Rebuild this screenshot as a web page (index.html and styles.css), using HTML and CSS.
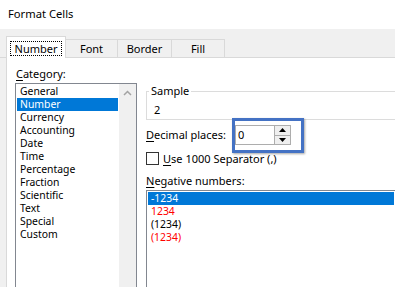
FILE: index.html
```html
<!DOCTYPE html>
<html lang="en">
<head>
    <meta charset="UTF-8">
    <meta name="viewport" content="width=device-width, initial-scale=1.0">
    <title>Format Cells</title>
    <link rel="stylesheet" href="styles.css">
</head>
<body>
    <div class="title">Format Cells</div>
    <div class="tabbar">
        <div class="tab active"><span class="focus">Number</span></div>
        <div class="tab tab-font">Font</div>
        <div class="tab tab-border">Border</div>
        <div class="tab tab-fill">Fill</div>
    </div>
    <div class="panel">
        <div class="category">
            <div class="label"><u>C</u>ategory:</div>
            <div class="listbox">
                <ul class="items">
                    <li>General</li>
                    <li class="selected">Number</li>
                    <li>Currency</li>
                    <li>Accounting</li>
                    <li>Date</li>
                    <li>Time</li>
                    <li>Percentage</li>
                    <li>Fraction</li>
                    <li>Scientific</li>
                    <li>Text</li>
                    <li>Special</li>
                    <li>Custom</li>
                </ul>
                <div class="scrollbar">
                    <div class="scroll-up">
                        <svg width="9" height="6" viewBox="0 0 9 6"><polyline points="1,5 4.5,1.5 8,5" fill="none" stroke="#a3a3a3" stroke-width="1.5"/></svg>
                    </div>
                </div>
            </div>
        </div>
        <div class="options">
            <fieldset class="sample">
                <legend>Sample</legend>
                <div class="sample-value">2</div>
            </fieldset>
            <div class="decimal-row">
                <div class="decimal-label"><u>D</u>ecimal places:</div>
                <div class="spin">
                    <div class="spin-value">0</div>
                    <div class="spin-buttons">
                        <div class="spin-btn">
                            <svg width="7" height="4" viewBox="0 0 7 4"><polygon points="0,4 3.5,0 7,4" fill="#000"/></svg>
                        </div>
                        <div class="spin-btn">
                            <svg width="7" height="4" viewBox="0 0 7 4"><polygon points="0,0 3.5,4 7,0" fill="#000"/></svg>
                        </div>
                    </div>
                </div>
            </div>
            <div class="check-row">
                <span class="checkbox"></span>
                <span><u>U</u>se 1000 Separator (,)</span>
            </div>
            <div class="label neg-label"><u>N</u>egative numbers:</div>
            <ul class="neglist">
                <li class="selected">-1234</li>
                <li class="red">1234</li>
                <li>(1234)</li>
                <li class="red">(1234)</li>
            </ul>
        </div>
    </div>
</body>
</html>
```

FILE: styles.css
```css
body {
    margin: 0;
    width: 395px;
    height: 287px;
    overflow: hidden;
    font-family: "Noto Sans", "Open Sans", sans-serif;
    font-size: 11px;
    color: #000;
    background: #f0f0f0;
    display: flex;
    flex-direction: column;
}
u {
    text-decoration: underline;
    text-underline-offset: 2px;
}
.title {
    flex-shrink: 0;
    background: #fff;
    height: 29px;
    line-height: 28px;
    padding-left: 8px;
    font-size: 11.2px;
}
.tabbar {
    flex-shrink: 0;
    height: 28px;
    border-bottom: 1px solid #d9d9d9;
    display: flex;
    align-items: flex-end;
    padding-left: 6px;
}
.tab {
    box-sizing: border-box;
    height: 18px;
    border-top: 1px solid #d9d9d9;
    border-right: 1px solid #d9d9d9;
    text-align: center;
    line-height: 18px;
}
.tab.active {
    width: 60px;
    height: 22px;
    margin-bottom: -1px;
    border-left: 1px solid #d9d9d9;
    background: #fff;
    padding-top: 4px;
    line-height: 13px;
    position: relative;
    z-index: 1;
}
.focus {
    display: inline-block;
    border: 1px dotted #000;
    padding: 0 2px;
    width: 46px;
}
.tab-font { width: 52px; }
.tab-border { width: 54px; }
.tab-fill { width: 53px; }
.panel {
    flex: 1;
    min-height: 0;
    background: #fff;
    margin-left: 6px;
    border-left: 1px solid #d9d9d9;
    display: flex;
    padding-top: 8px;
    gap: 9px;
}
.label {
    line-height: 16px;
    height: 16px;
    padding-left: 1px;
}
.category {
    padding-left: 8px;
    display: flex;
    flex-direction: column;
}
.listbox {
    flex: 1;
    margin-top: 1px;
    width: 122px;
    box-sizing: border-box;
    border: 1px solid #828790;
    border-bottom: none;
    display: flex;
}
.items, .neglist {
    list-style: none;
    margin: 0;
    padding: 1px;
    font-size: 10.4px;
}
.items {
    width: 103px;
    box-sizing: border-box;
}
.items li, .neglist li {
    height: 13px;
    line-height: 13px;
    padding-left: 3px;
    white-space: nowrap;
}
.selected {
    background: #0078d7;
    color: #fff;
}
.scrollbar {
    width: 17px;
    background: #f0f0f0;
}
.scroll-up {
    height: 17px;
    display: flex;
    align-items: center;
    justify-content: center;
}
.options {
    flex: 1;
    min-width: 0;
    display: flex;
    flex-direction: column;
}
.sample {
    margin: 18px 0 0;
    padding: 5px 7px 2px;
    border: 1px solid #dcdcdc;
    border-right: none;
    min-width: 0;
}
.sample legend {
    padding: 0 2px;
    margin-left: -5px;
    line-height: 14px;
}
.sample-value {
    line-height: 14px;
}
.decimal-row {
    margin-top: 5px;
    display: flex;
    align-items: center;
}
.decimal-label {
    width: 89px;
    line-height: 20px;
}
.spin {
    position: relative;
    width: 56px;
    height: 20px;
    box-sizing: border-box;
    border: 1px solid #adadad;
    background: #fff;
    display: flex;
}
.spin::after {
    content: "";
    position: absolute;
    top: -8px;
    left: -4px;
    right: -14px;
    bottom: -9px;
    border: 3px solid #4472c4;
    box-shadow: 1px 1px 2px rgba(0, 0, 0, 0.35);
}
.spin-value {
    flex: 1;
    line-height: 18px;
    padding-left: 2px;
}
.spin-buttons {
    width: 15px;
    display: flex;
    flex-direction: column;
    border-left: 1px solid #adadad;
}
.spin-btn {
    flex: 1;
    background: #efefef;
    display: flex;
    align-items: center;
    justify-content: center;
}
.spin-btn + .spin-btn {
    border-top: 1px solid #adadad;
}
.check-row {
    margin-top: 7px;
    height: 13px;
    display: flex;
    align-items: center;
    gap: 4px;
    line-height: 13px;
}
.checkbox {
    width: 13px;
    height: 13px;
    box-sizing: border-box;
    border: 1px solid #333;
    background: #fff;
}
.neg-label {
    margin-top: 8px;
    padding-left: 0;
}
.neglist {
    flex: 1;
    margin-top: 1px;
    border: 1px solid #828790;
    border-right: none;
    border-bottom: none;
}
.neglist li {
    padding-left: 3px;
}
.red {
    color: #ff0000;
}
```
